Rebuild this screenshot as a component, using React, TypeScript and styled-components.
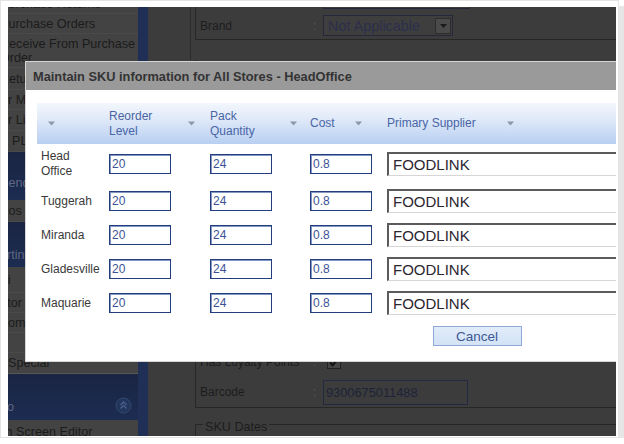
import React from "react";
import styled, { createGlobalStyle } from "styled-components";

const Global = createGlobalStyle`
  html, body { margin: 0; padding: 0; background: #ffffff; }
  body { font-family: "Liberation Sans", Arial, sans-serif; }
`;

const FONT = `"Liberation Sans", Arial, sans-serif`;

const Frame = styled.div`
  width: 619px;
  height: 438px;
  box-sizing: border-box;
  border: 1px solid #e4e4e4;
  box-shadow: 5px 6px 0 #e6e6e6;
  background: #ffffff;
  padding: 6px 2px 1px 7px;
`;

const Screen = styled.div`
  position: relative;
  width: 608px;
  height: 429px;
  overflow: hidden;
  display: flex;
  background-color: #3c3c3c;
  font-family: ${FONT};
`;

/* ---------- dimmed sidebar ---------- */
const Sidebar = styled.nav`
  flex: none;
  width: 140px;
  margin-top: -13px;
  align-self: flex-start;
  display: flex;
  flex-direction: column;
  background-color: #1f2f55;
`;

const SideItem = styled.div<{ $h: number; $line?: string }>`
  flex: none;
  height: ${(p) => p.$h}px;
  margin-right: 10px;
  box-sizing: border-box;
  display: flex;
  align-items: center;
  overflow: hidden;
  white-space: nowrap;
  background-color: #434343;
  border-bottom: 1px solid ${(p) => p.$line ?? "#4a4a4a"};
  color: #1b1b1b;
  font-size: 12.6px;
  line-height: 14px;
`;

const SideHead = styled.div<{ $h: number; $pb: number }>`
  flex: none;
  height: ${(p) => p.$h}px;
  margin-right: 10px;
  box-sizing: border-box;
  display: flex;
  align-items: flex-end;
  justify-content: space-between;
  padding-bottom: ${(p) => p.$pb}px;
  overflow: hidden;
  white-space: nowrap;
  background-image: linear-gradient(#1a2542, #1c2c52);
  color: #5f6884;
  font-size: 12.6px;
  line-height: 14px;
`;

const SideText = styled.span<{ $indent?: number }>`
  display: block;
  margin-left: ${(p) => p.$indent ?? -8}px;
`;

const CollapseIcon = styled.svg`
  flex: none;
  margin-right: 6px;
`;

/* ---------- dimmed main area ---------- */
const Main = styled.div`
  flex: 1;
  min-width: 0;
  display: flex;
  flex-direction: column;
  padding-left: 42px;
  background-color: #3c3c3c;
`;

const TopBlock = styled.div`
  flex: none;
  margin-top: -22px;
  border-left: 1px solid #2c2c2c;
  padding: 0 0 20px 4px;
`;

const Panel = styled.div<{ $h?: number }>`
  flex: none;
  border-left: 1px solid #272727;
  border-bottom: 1px solid #272727;
  padding-left: 4px;
  display: flex;
  flex-direction: column;
  justify-content: flex-end;
  box-sizing: border-box;
  ${(p) => (p.$h ? `height: ${p.$h}px;` : "")}
`;

const LowerPanel = styled(Panel)`
  margin-left: 5px;
`;

const FieldRow = styled.div<{ $h: number }>`
  flex: none;
  height: ${(p) => p.$h}px;
  display: flex;
  align-items: center;
`;

const FieldLabel = styled.span`
  width: 113px;
  flex: none;
  font-size: 12px;
  color: #1c1c1c;
  white-space: nowrap;
`;

const Colon = styled.span`
  width: 10px;
  flex: none;
  font-size: 12px;
  color: #555555;
`;

const SelectBox = styled.div<{ $w: number }>`
  width: ${(p) => p.$w}px;
  height: 21px;
  box-sizing: border-box;
  border: 1px solid #24283a;
  background-color: #3e3e3e;
  display: flex;
  align-items: center;
  justify-content: space-between;
  padding-left: 4px;
  font-size: 14.4px;
  color: #2c2e4c;
  white-space: nowrap;
`;

const DropButton = styled.span`
  width: 16px;
  height: 16px;
  margin-right: 1px;
  box-sizing: border-box;
  border: 1px solid #2c2c2c;
  background-color: #4a4a4a;
  display: flex;
  align-items: center;
  justify-content: center;
`;

const TextBox = styled.div`
  width: 145px;
  height: 25px;
  box-sizing: border-box;
  border: 1px solid #22283f;
  display: flex;
  align-items: center;
  padding-left: 2px;
  font-size: 12.8px;
  color: #1e2339;
`;

const CheckBox = styled.span`
  width: 14px;
  height: 14px;
  box-sizing: border-box;
  margin-left: 4px;
  border: 1px solid #222222;
  background-color: #454545;
  display: flex;
  align-items: center;
  justify-content: center;
`;

const SkuSet = styled.fieldset`
  flex: none;
  margin: 6px 0 0 5px;
  padding: 0 0 0 7px;
  border: 1px solid #272727;
  border-right: none;
  border-bottom: none;
  min-height: 30px;
`;

const SkuLegend = styled.legend`
  padding: 6px 2px 0;
  font-size: 12.6px;
  line-height: 14px;
  color: #1c1c1c;
`;

/* ---------- modal ---------- */
const Modal = styled.section`
  position: absolute;
  left: 17px;
  top: 54px;
  width: 904px;
  height: 301px;
  box-sizing: border-box;
  border: 1px solid #d6d6d6;
  background-color: #ffffff;
  display: flex;
  flex-direction: column;
`;

const TitleBar = styled.header`
  height: 28px;
  flex: none;
  display: flex;
  align-items: center;
  padding-left: 7px;
  background-color: #9a9a9a;
  color: #333333;
  font-weight: bold;
  font-size: 12.8px;
  white-space: nowrap;
`;

const Body = styled.div`
  padding: 13px 11px 0;
`;

const Grid = styled.div`
  display: grid;
  grid-template-columns: 72px 101px 100px 77px 1fr;
`;

const HeadCell = styled.div<{ $pad?: number }>`
  height: 41px;
  display: flex;
  align-items: center;
  padding-left: ${(p) => p.$pad ?? 0}px;
  background-image: linear-gradient(#f3f7fd 0%, #dfe9f8 40%, #b8cff2 100%);
  color: #4a65a6;
  font-size: 12px;
  line-height: 15px;
  white-space: nowrap;
`;

const HeadText = styled.span<{ $w: number }>`
  width: ${(p) => p.$w}px;
  flex: none;
`;

const ArrowSvg = styled.svg`
  flex: none;
`;

const LabelCell = styled.div`
  display: flex;
  align-items: center;
  padding: 5px 8px 5px 4px;
  color: #3a3a3a;
  font-size: 12px;
  line-height: 15px;
`;

const InputCell = styled.div`
  display: flex;
  align-items: center;
  padding: 5px 0;
`;

const NumInput = styled.input`
  width: 62px;
  height: 20px;
  box-sizing: border-box;
  margin: 0;
  border: 1px solid #233e7f;
  box-shadow: inset 1px 1px 0 #8397c3;
  padding: 0 2px;
  font: 12px ${FONT};
  color: #3c5295;
  background-color: #ffffff;
  outline: none;
`;

const SupplierInput = styled.input`
  width: 420px;
  height: 24px;
  box-sizing: border-box;
  margin: 0;
  border-style: solid;
  border-width: 2px 1px 1px 2px;
  border-color: #5b5b5b #dcdcdc #d6d6d6 #5b5b5b;
  padding: 0 4px;
  font: 15px ${FONT};
  color: #2b2630;
  background-color: #ffffff;
  outline: none;
`;

const Actions = styled.div`
  display: flex;
  justify-content: center;
  margin-top: 6px;
`;

const CancelButton = styled.button`
  width: 89px;
  height: 20px;
  box-sizing: border-box;
  padding: 0;
  border: 1px solid #8fabd5;
  background-image: linear-gradient(#e1ecfa, #d3e2f6);
  color: #3c5993;
  font: 13.5px ${FONT};
`;

const SortArrow = () => (
  <ArrowSvg width="7" height="5" viewBox="0 0 7 5">
    <path d="M0 0.5h7L3.5 4.5z" fill="#8c97ab" />
  </ArrowSvg>
);

const stores = [
  { name: "Head Office", reorder: "20", pack: "24", cost: "0.8", supplier: "FOODLINK" },
  { name: "Tuggerah", reorder: "20", pack: "24", cost: "0.8", supplier: "FOODLINK" },
  { name: "Miranda", reorder: "20", pack: "24", cost: "0.8", supplier: "FOODLINK" },
  { name: "Gladesville", reorder: "20", pack: "24", cost: "0.8", supplier: "FOODLINK" },
  { name: "Maquarie", reorder: "20", pack: "24", cost: "0.8", supplier: "FOODLINK" },
];

export default function App() {
  return (
    <>
      <Global />
      <Frame>
        <Screen>
          <Sidebar>
            <SideItem $h={20}><SideText>Purchase Returns</SideText></SideItem>
            <SideItem $h={20}><SideText>Purchase Orders</SideText></SideItem>
            <SideItem $h={34}>
              <SideText>
                Receive From Purchase
                <br />
                Order
              </SideText>
            </SideItem>
            <SideItem $h={22}><SideText>Return To Supplier</SideText></SideItem>
            <SideItem $h={20}><SideText $indent={-42}>Supplier Maintenance</SideText></SideItem>
            <SideItem $h={21}><SideText $indent={-42}>Supplier List</SideText></SideItem>
            <SideItem $h={21}><SideText $indent={4}>PLU Maintenance</SideText></SideItem>
            <SideHead $h={48} $pb={10}><SideText>Pending</SideText></SideHead>
            <SideItem $h={22}><SideText>Pos Settings</SideText></SideItem>
            <SideHead $h={45} $pb={5}><SideText $indent={-31}>Reporting</SideText></SideHead>
            <SideItem $h={26}><SideText $indent={-24}>Multi</SideText></SideItem>
            <SideItem $h={20}><SideText $indent={-19}>Editor</SideText></SideItem>
            <SideItem $h={20}><SideText $indent={-9}>Home Page</SideText></SideItem>
            <SideItem $h={20}><SideText $indent={20}>Gift Cards</SideText></SideItem>
            <SideItem $h={21} $line="#575757"><SideText $indent={0}>Special</SideText></SideItem>
            <SideHead $h={46} $pb={6}>
              <SideText $indent={-15}>Info</SideText>
              <CollapseIcon width="17" height="17" viewBox="0 0 17 17">
                <circle cx="8.5" cy="8.5" r="7.5" fill="#22355c" stroke="#34486e" strokeWidth="1" />
                <path d="M5.5 8l3-3 3 3M5.5 11.5l3-3 3 3" fill="none" stroke="#4a5f88" strokeWidth="1.4" />
              </CollapseIcon>
            </SideHead>
            <SideItem $h={24}><SideText $indent={-29}>Touch Screen Editor</SideText></SideItem>
          </Sidebar>

          <Main>
            <TopBlock>
              <Panel>
                <FieldRow $h={27}>
                  <FieldLabel>Department</FieldLabel>
                  <Colon>:</Colon>
                  <SelectBox $w={147}>
                    Grocery
                    <DropButton />
                  </SelectBox>
                </FieldRow>
                <FieldRow $h={27}>
                  <FieldLabel>Brand</FieldLabel>
                  <Colon>:</Colon>
                  <SelectBox $w={130}>
                    Not Applicable
                    <DropButton>
                      <svg width="7" height="4" viewBox="0 0 7 4">
                        <path d="M0 0h7L3.5 4z" fill="#1a1a1a" />
                      </svg>
                    </DropButton>
                  </SelectBox>
                </FieldRow>
              </Panel>
            </TopBlock>

            <LowerPanel $h={348}>
              <FieldRow $h={30}>
                <FieldLabel>Has Loyalty Points</FieldLabel>
                <Colon>:</Colon>
                <CheckBox>
                  <svg width="10" height="9" viewBox="0 0 10 9">
                    <path d="M1 4.5l2.6 2.8L9 1" fill="none" stroke="#111111" strokeWidth="2" />
                  </svg>
                </CheckBox>
              </FieldRow>
              <FieldRow $h={30}>
                <FieldLabel>Barcode</FieldLabel>
                <Colon>:</Colon>
                <TextBox>9300675011488</TextBox>
              </FieldRow>
            </LowerPanel>

            <SkuSet>
              <SkuLegend>SKU Dates</SkuLegend>
            </SkuSet>
          </Main>

          <Modal>
            <TitleBar>Maintain SKU information for All Stores - HeadOffice</TitleBar>
            <Body>
              <Grid>
                <HeadCell $pad={11}>
                  <SortArrow />
                </HeadCell>
                <HeadCell>
                  <HeadText $w={79}>
                    Reorder
                    <br />
                    Level
                  </HeadText>
                  <SortArrow />
                </HeadCell>
                <HeadCell>
                  <HeadText $w={80}>
                    Pack
                    <br />
                    Quantity
                  </HeadText>
                  <SortArrow />
                </HeadCell>
                <HeadCell>
                  <HeadText $w={45}>Cost</HeadText>
                  <SortArrow />
                </HeadCell>
                <HeadCell>
                  <HeadText $w={120}>Primary Supplier</HeadText>
                  <SortArrow />
                </HeadCell>

                {stores.map((s) => (
                  <React.Fragment key={s.name}>
                    <LabelCell>{s.name}</LabelCell>
                    <InputCell>
                      <NumInput readOnly value={s.reorder} />
                    </InputCell>
                    <InputCell>
                      <NumInput readOnly value={s.pack} />
                    </InputCell>
                    <InputCell>
                      <NumInput readOnly value={s.cost} />
                    </InputCell>
                    <InputCell>
                      <SupplierInput readOnly value={s.supplier} />
                    </InputCell>
                  </React.Fragment>
                ))}
              </Grid>
              <Actions>
                <CancelButton type="button">Cancel</CancelButton>
              </Actions>
            </Body>
          </Modal>
        </Screen>
      </Frame>
    </>
  );
}
